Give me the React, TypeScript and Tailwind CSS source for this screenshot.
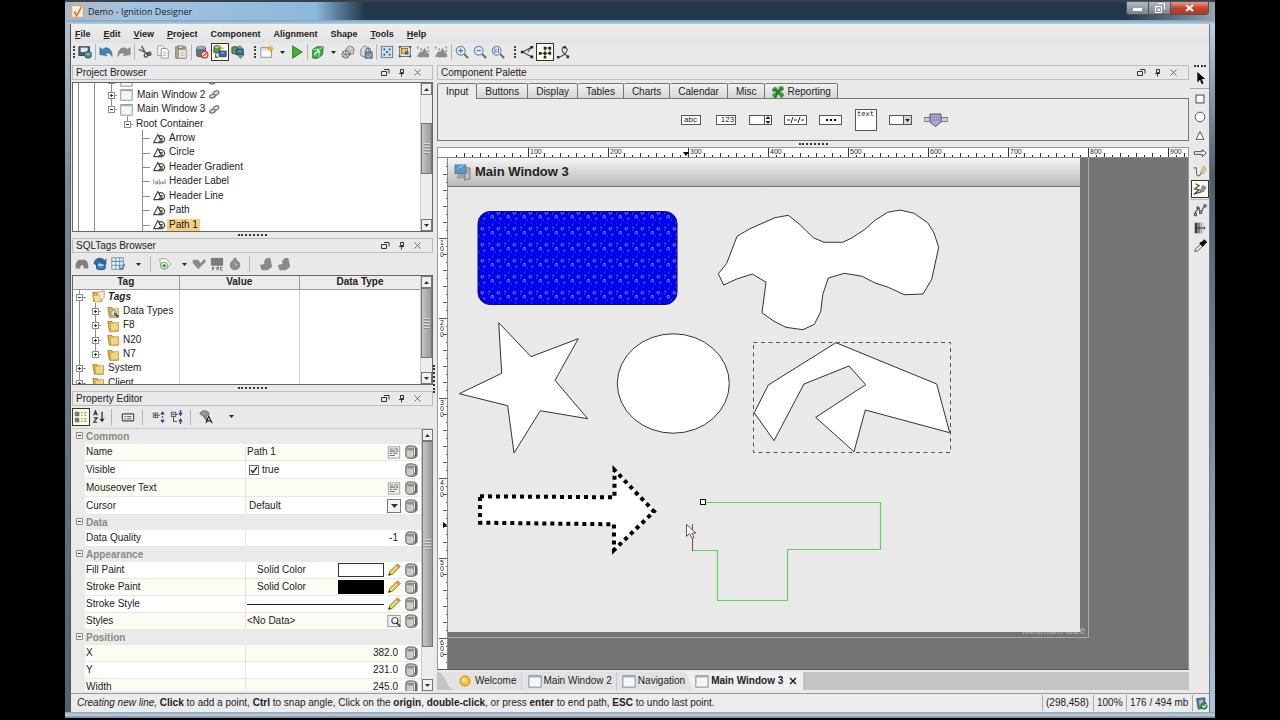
import type { ReactNode } from "react";
import clsx from "clsx";

/* ---------- icons, all on a 16x16 grid ---------- */

function Svg({ children, size = 16 }: { children: ReactNode; size?: number }) {
  return (
    <svg width={size} height={size} viewBox="0 0 16 16" fill="none" className="shrink-0">
      {children}
    </svg>
  );
}

const icons = {
  logo: (
    <>
      <rect x="1" y="1" width="14" height="14" rx="1" fill="#fdf3e6" stroke="#e09a52" />
      <path d="M4 8l3 5 6-11" stroke="#d9712a" strokeWidth="2" />
    </>
  ),
  publish: (
    <>
      <rect x="1" y="2" width="12" height="10" fill="#4d5f6b" stroke="#2d3a42" />
      <rect x="3" y="3" width="8" height="5" fill="#dfe9ee" />
      <circle cx="11.500" cy="11" r="4" fill="#3f8f93" stroke="#1f5a60" />
      <path d="M9 11c2-2 3 1 5-1" stroke="#c5e6c9" />
    </>
  ),
  undo: <path d="M1 11V3l3 2c5-4 11-1 11 8-2-4-5-5-8-3l2 2z" fill="#3d86bd" stroke="#235f91" strokeWidth=".7" />,
  redo: <path d="M15 11V3l-3 2C7 1 1 4 1 13c2-4 5-5 8-3l-2 2z" fill="#8d8d8d" stroke="#777" strokeWidth=".7" />,
  cut: (
    <>
      <path d="M4 1l5 9M1 5l13 6" stroke="#5a5a5a" strokeWidth="1.600" />
      <circle cx="9" cy="12" r="2" stroke="#444" strokeWidth="1.400" />
      <circle cx="13" cy="10" r="1.800" stroke="#444" strokeWidth="1.400" />
    </>
  ),
  copy: (
    <>
      <path d="M2 1h6l2 2v9H2z" fill="#f8f8f8" stroke="#999" />
      <path d="M6 4h6l2 2v9H6z" fill="#fff" stroke="#888" />
      <path d="M8 8h4M8 10h4M8 12h4" stroke="#bbb" />
    </>
  ),
  paste: (
    <>
      <rect x="2" y="2" width="11" height="13" fill="#b9a98a" stroke="#7f735c" />
      <rect x="5" y="1" width="5" height="3" fill="#ddd" stroke="#777" />
      <path d="M5 5h9v10H5z" fill="#f2f0ea" stroke="#8d8672" />
      <path d="M7 8h5M7 10h5M7 12h5" stroke="#c0b89f" />
    </>
  ),
  dbOff: (
    <>
      <path d="M2 3c0-2 10-2 10 0v9c0 2-10 2-10 0z" fill="#5e7387" stroke="#3c4d5c" />
      <ellipse cx="7" cy="3" rx="5" ry="1.500" fill="#9db0c0" />
      <circle cx="11" cy="11" r="3.700" fill="#f6e2de" stroke="#cf3a2a" strokeWidth="1.500" />
      <path d="M9 13l4-4" stroke="#cf3a2a" strokeWidth="1.500" />
    </>
  ),
  dbRead: (
    <>
      <path d="M1 2c0-1.500 7-1.500 7 0v6c0 1.500-7 1.500-7 0z" fill="#5c9a5c" stroke="#27502f" />
      <ellipse cx="4.500" cy="2.300" rx="3" ry="1" fill="#b5d8b5" />
      <rect x="7" y="7" width="8" height="6" fill="#3e64b4" stroke="#243c74" />
      <path d="M9 9h4M9 14.500h5" stroke="#a9c2f0" />
      <path d="M3 10v4h3" stroke="#3f8a3c" strokeWidth="1.500" />
      <path d="M9.500 5V2.500l3 2" stroke="#d9b93c" strokeWidth="1.300" />
    </>
  ),
  dbWrite: (
    <>
      <path d="M1 3c0-1.500 7-1.500 7 0v6c0 1.500-7 1.500-7 0z" fill="#5c9a5c" stroke="#27502f" />
      <rect x="6" y="5" width="8" height="6" fill="#3e64b4" stroke="#243c74" />
      <path d="M8 7h4" stroke="#a9c2f0" />
      <path d="M7 11h8l-4 4.500z" fill="#5fb052" stroke="#2f6e2b" strokeWidth=".7" />
      <path d="M7 4l3-3.500L13.500 4z" fill="#5fb052" stroke="#2f6e2b" strokeWidth=".7" />
    </>
  ),
  newWindow: (
    <>
      <rect x="1" y="3" width="12" height="11" fill="#fdfdfd" stroke="#7d8a94" />
      <path d="M2 5h10" stroke="#c9d4dc" strokeWidth="2" />
      <path d="M12 0v8M8 4h8M9.500 1.500l5 5M14.500 1.500l-5 5" stroke="#f0b429" strokeWidth="1.200" />
    </>
  ),
  play: <path d="M3 1l11 7-11 7z" fill="#3fb030" stroke="#1f7a1a" />,
  cube: (
    <>
      <path d="M2 5l5-3h7l-1 9-5 4H2z" fill="#3fae4a" stroke="#1c6f28" />
      <path d="M2 5h7l5-3M9 5v9" stroke="#b4ecb4" />
      <path d="M4 12c0-4 4-3 4-6l2 3" stroke="#e9ffe9" strokeWidth="1.500" />
    </>
  ),
  gearBox: (
    <>
      <path d="M6 4l4-3 5 3-1 6-5 1-3-3z" fill="#ddd" stroke="#6d6d6d" />
      <path d="M8 4l3 2 4-2M11 6v5" stroke="#999" />
      <circle cx="5.500" cy="10.500" r="4" fill="#c9c9c9" stroke="#666" strokeWidth="1.800" strokeDasharray="2 .8" />
      <circle cx="5.500" cy="10.500" r="1.500" fill="#777" />
    </>
  ),
  lockBox: (
    <>
      <path d="M2 5l4-4 5 2v6l-4 5-5-2z" fill="#dadada" stroke="#777" />
      <rect x="7" y="8" width="8" height="7" fill="#6f94b8" stroke="#3f5f7f" />
      <path d="M8 8V6c0-3 5-3 5 0v2" stroke="#666" strokeWidth="1.300" />
      <path d="M9 12l2 2 3-4" stroke="#f0d060" />
    </>
  ),
  selectAll: (
    <>
      <rect x="1.500" y="1.500" width="13" height="13" fill="#cfe2f2" stroke="#4e6f8b" />
      <path d="M4 4h2v2H4zM10 4h2v2h-2zM4 10h2v2H4zM10 10h2v2h-2zM7 7h2v2H7z" fill="#2d4a66" />
    </>
  ),
  group: (
    <>
      <rect x="2" y="2" width="12" height="11" fill="#f4f4f4" stroke="#555" />
      <rect x="4" y="4" width="7" height="6" fill="#ecca3c" stroke="#8d721b" />
      <rect x="8" y="7" width="4" height="4" fill="#3f68b8" />
      <path d="M1 1h2v2H1zM13 1h2v2h-2zM1 12h2v2H1zM13 12h2v2h-2z" fill="#444" />
    </>
  ),
  shapes: (
    <path d="M1 13l4-6 2 1 3-5 3 6 2 1v4H4zM1 2h2v2H1zM5 4h2v2H5zM13 2h2v2h-2zM13 6h2v2h-2z" fill="#8c8c8c" />
  ),
  zoomIn: (
    <>
      <circle cx="6.500" cy="6.500" r="5" fill="#e6eff8" stroke="#7088a8" strokeWidth="1.300" />
      <path d="M6.500 4v5M4 6.500h5" stroke="#4a6db0" strokeWidth="1.300" />
      <path d="M10.500 10.500L15 15" stroke="#6a6253" strokeWidth="2.200" />
    </>
  ),
  zoomOut: (
    <>
      <circle cx="6.500" cy="6.500" r="5" fill="#e6eff8" stroke="#7088a8" strokeWidth="1.300" />
      <path d="M4 6.500h5" stroke="#4a6db0" strokeWidth="1.300" />
      <path d="M10.500 10.500L15 15" stroke="#6a6253" strokeWidth="2.200" />
    </>
  ),
  zoomReset: (
    <>
      <circle cx="6.500" cy="6.500" r="5" fill="#e6eff8" stroke="#7088a8" strokeWidth="1.300" />
      <path d="M4.500 4v5M8.500 4v5M6.500 5v1M6.500 7.500v1" stroke="#4a6db0" strokeWidth="1.200" />
      <path d="M10.500 10.500L15 15" stroke="#6a6253" strokeWidth="2.200" />
    </>
  ),
  lineFree: (
    <>
      <path d="M13 2.500L3 8l10 5.500M13 2.500L9 8" stroke="#444" strokeWidth="1.200" />
      <path d="M12 1h3v3h-3zM1 6.500h3v3H1zM12 12h3v3h-3z" fill="#222" />
    </>
  ),
  lineOrtho: (
    <>
      <path d="M2 9.500h11.500v-6H8V14" stroke="#444" />
      <path d="M1 8h3v3H1zM12 2h3v3h-3zM6.500 2h3v3h-3zM12 8h3v3h-3zM6.500 8h3v3h-3zM6.500 12.500h3v3h-3z" fill="#222" />
    </>
  ),
  lineCurve: (
    <>
      <path d="M2 14c6-1 10-5 11-9-2-4-6-3-6 0s3 6 7 8" stroke="#444" strokeWidth="1.200" />
      <path d="M8.500 1h3v3h-3zM1 12.500h3v3H1zM12 12h3v3h-3z" fill="#333" />
    </>
  ),
  link: (
    <>
      <ellipse cx="10" cy="6" rx="4.500" ry="3" transform="rotate(-35 10 6)" fill="#ddd" stroke="#777" strokeWidth="1.800" />
      <ellipse cx="5" cy="10.500" rx="4.500" ry="2.600" transform="rotate(-15 5 10.500)" fill="#ccc" stroke="#777" strokeWidth="1.800" />
    </>
  ),
  window: (
    <>
      <rect x="1" y="2" width="14" height="13" fill="#f4f7f9" stroke="#75818a" />
      <path d="M1 3h14" stroke="#9fb0bc" strokeWidth="2" />
    </>
  ),
  shape: (
    <>
      <path d="M1 13L6 3l5 10z" stroke="#444" strokeWidth="1.400" />
      <path d="M7 5c6-2 9 4 6 7-2 1-4 1-6-1M8 5v3h3v4" stroke="#444" strokeWidth="1.400" />
    </>
  ),
  label: (
    <path d="M1 5v6M3.500 11V8h2v3zM7.500 5v6h2V8M11.500 11V8.500h1.500V11M15 5v6" stroke="#666" strokeWidth=".9" />
  ),
  folder: (
    <>
      <path d="M1 3h5l2 2h6v10H3z" fill="#e3b44a" stroke="#9c7a26" />
      <path d="M4 6l10-2v10L5 15z" fill="#f3d683" stroke="#c29a3c" strokeWidth=".6" />
    </>
  ),
  folderGear: (
    <>
      <path d="M1 3h5l2 2h6v10H3z" fill="#e3b44a" stroke="#9c7a26" />
      <path d="M4 6l10-2v10L5 15z" fill="#f3d683" stroke="#c29a3c" strokeWidth=".6" />
      <circle cx="8" cy="10" r="3.500" fill="#ddd" stroke="#777" />
      <path d="M9 10l5 5" stroke="#444" strokeWidth="2" />
    </>
  ),
  folders: (
    <>
      <path d="M1 3h5l1 2h5v9H2z" fill="#e3b44a" stroke="#9c7a26" />
      <path d="M6 3l9-2v8l-6 6z" fill="#f7efcf" stroke="#a99867" />
      <path d="M1 7l8-1 2 8-7 1z" fill="#f3dc95" stroke="#b89a4e" strokeWidth=".7" />
    </>
  ),
  binoculars: (
    <path d="M1 13c-1-5 1-9 4-10h6c3 1 5 5 4 10h-5c0-3-1-4-2-4s-2 1-2 4z" fill="#808080" />
  ),
  refreshDb: (
    <>
      <path d="M4 6c0-2 10-2 10 0v7c0 2-10 2-10 0z" fill="#3c7db5" stroke="#1f5182" />
      <ellipse cx="9" cy="9" rx="3.500" ry="1.500" fill="#bcd8ee" />
      <path d="M1 8c0-7 9-9 12-4l2-2v6H9l2-2C9 4 5 4 4 9z" fill="#2f6c9e" stroke="#1f5182" strokeWidth=".5" />
    </>
  ),
  grid: (
    <>
      <rect x="1" y="1" width="13" height="13" fill="#f7fbfd" stroke="#5f8298" />
      <path d="M1 5h13M1 9.500h13M5.500 1v13M10 1v13" stroke="#5d94b8" strokeWidth="1.200" />
      <path d="M9 11l3 3 4-6" stroke="#5a7ba0" strokeWidth="1.600" />
    </>
  ),
  tagAdd: (
    <>
      <path d="M2 2h7l6 6-6 6-6-4z" fill="#fafafa" stroke="#999" />
      <circle cx="7" cy="10" r="4" fill="#eaf5e7" stroke="#5d8f55" />
      <path d="M7 8v4M5 10h4" stroke="#2f8a2a" strokeWidth="1.500" />
    </>
  ),
  tagEdit: <path d="M1 3h6l3 4 4-5 2 3-6 6-3 3-6-7z" fill="#8b8b8b" />,
  opc: (
    <>
      <rect x="1" y="1" width="14" height="9" fill="#7d7d7d" />
      <path d="M3 11.500v4M3 12h2M3 13.500h2M8 15.500v-4h2v2H8M14.500 12H12v3h2.500" stroke="#555" strokeWidth=".9" />
    </>
  ),
  timer: (
    <>
      <circle cx="8" cy="9" r="6" fill="#8b8b8b" />
      <path d="M6 1h4v3H6z" fill="#8b8b8b" />
      <path d="M8 6v3h3" stroke="#ccc" />
    </>
  ),
  importTag: <path d="M1 9l5-1V4l3-3h4l1 5 1 5-5 4H3z" fill="#8a8a8a" />,
  categorized: (
    <>
      <path d="M1.500 2.500h4v4h-4zM1.500 9.500h4v4h-4z" fill="#ddd" stroke="#444" />
      <path d="M2.500 4.500h2M3.500 3.500v2M2.500 11.500h2M3.500 10.500v2" stroke="#222" strokeWidth=".8" />
      <path d="M8 3h2M11.500 3h3M8 6h2M11.500 6h3M8 10h2M11.500 10h3M8 13h2M11.500 13h3" stroke="#a09a52" strokeWidth="1.200" />
    </>
  ),
  sort: (
    <>
      <path d="M2 6l2-5 2 5M3 4.500h2M2 9h4l-4 5h4" stroke="#333" strokeWidth="1.300" />
      <path d="M11.500 2v9" stroke="#1f2f66" strokeWidth="1.500" />
      <path d="M8.500 10h6l-3 4z" fill="#1f2f66" />
    </>
  ),
  description: (
    <>
      <rect x="1.500" y="4.500" width="13" height="8" rx="1" fill="#eee" stroke="#444" strokeWidth="1.300" />
      <path d="M4 7.500h2M7 7.500h5M4 10h2M7 10h5" stroke="#555" />
    </>
  ),
  expandAll: (
    <>
      <rect x="1.500" y="3.500" width="5" height="5" fill="#ddd" stroke="#555" />
      <path d="M2.500 6h3M4 4.500v3M7 6h2" stroke="#333" />
      <path d="M9.500 5L12 1l2.500 4zM9.500 11l2.500 4 2.500-4z" fill="#28378c" />
      <path d="M12 7v2" stroke="#28378c" strokeWidth="1.500" />
    </>
  ),
  collapseAll: (
    <>
      <rect x="1.500" y="2.500" width="5" height="5" fill="#ddd" stroke="#555" />
      <path d="M2.500 5h3M4 8v5h4M7 5h2" stroke="#333" />
      <path d="M9.500 3l2.500 4 2.500-4zM9.500 13L12 9l2.500 4z" fill="#28378c" />
      <path d="M12 0v3M12 13v3" stroke="#28378c" strokeWidth="1.500" />
    </>
  ),
  filter: (
    <>
      <path d="M1 4c2-4 8-4 11 0L8 7l1 6-3-5z" fill="#999" stroke="#555" />
      <path d="M8 15l3-8 4 8M9 12.500h4" stroke="#222" strokeWidth="1.300" />
    </>
  ),
  page: (
    <>
      <path d="M1.500 2h13v13h-13z" fill="#f4f4f4" stroke="#9a9a9a" />
      <path d="M3 4.500h4M8 4.500h5M3 7h6M10 7h3M3 9.500h3M7 9.500h5M3 12h6" stroke="#6e6e6e" strokeWidth="1.200" />
    </>
  ),
  binding: (
    <>
      <path d="M2 4c0-3 4-3.500 8-3s5 2 5 4v7c0 2-3 3.500-7 3.500S2 14 2 12z" fill="#8f8f8f" stroke="#6a6a6a" />
      <path d="M3 5c2 1.500 4 1.500 6 1v8c-2 .5-4 .3-6-1z" fill="#c9c9c9" />
      <path d="M9.500 6.500v7M12 4.500v7" stroke="#f0f0f0" strokeWidth="1.200" />
      <path d="M13.500 4v9" stroke="#555" strokeWidth="1.500" />
      <path d="M4 3.500c2-1.500 6-1.500 8 0" stroke="#d8d8d8" />
    </>
  ),
  pencil: (
    <>
      <path d="M2 14l1-4 9-9 3 3-9 9z" fill="#eadb4e" stroke="#7a6c1c" />
      <path d="M11 2l3 3" stroke="#d98a8a" strokeWidth="2.500" />
      <path d="M1.500 14.500l3-1-2-2z" fill="#333" />
    </>
  ),
  lookup: (
    <>
      <rect x="1" y="1.500" width="14" height="13" fill="#f2f2f2" stroke="#888" />
      <circle cx="9" cy="7.500" r="3.500" fill="#fff" stroke="#555" strokeWidth="1.400" />
      <path d="M11 10l4 4" stroke="#333" strokeWidth="2" />
    </>
  ),
  computer: (
    <>
      <path d="M10 3l5 1v10l-5 1z" fill="#b9bcc0" stroke="#7b8085" />
      <path d="M11.500 6h2.500M11.500 8h2.500" stroke="#8a8e93" />
      <rect x="1" y="1" width="10" height="8" fill="#4d9adb" stroke="#6d7880" />
      <path d="M2 5l5-3.500h3z" fill="#a5d2f5" />
      <path d="M4 10h5l1 3H3z" fill="#a9adb2" stroke="#777" strokeWidth=".6" />
    </>
  ),
  dbOk: (
    <>
      <path d="M2 2l10-1 1 12-9 2z" fill="#4f7a9c" stroke="#45535e" />
      <path d="M5 4l5-1v6l-4 3z" fill="#a4c4da" />
      <circle cx="11" cy="11" r="4" fill="#3a9a3a" stroke="#1f6a22" />
      <path d="M9 11l2 2 3-4" stroke="#fff" strokeWidth="1.300" />
    </>
  ),
  clover: (
    <>
      <path d="M7 7L2 8 1 5l3-3 3 1zM8 7l1-5 4-1 2 3-2 3zM9 8l5 1 1 3-3 3-3-3zM7 9v5l-3 1-3-3 2-3z" fill="#3c9a3b" />
      <circle cx="8" cy="8" r="3" fill="#2f8a33" />
      <path d="M8 7l-3 8M3 5l4 2M12 4L9 7" stroke="#1f6424" strokeWidth="1.200" />
    </>
  ),
  // drawing tools on the right edge
  pointer: <path d="M5 1v12l3-3 2 5 2-1-2-5h4z" fill="#000" />,
  square: <rect x="3.500" y="3.500" width="9" height="9" fill="#fff" stroke="#333" />,
  circle: <circle cx="8" cy="8" r="5.500" fill="#fff" stroke="#444" />,
  triangle: <path d="M8 4l4.500 9h-9z" fill="#fff" stroke="#444" />,
  arrow: <path d="M1.500 6.500h9V4l4.500 4-4.500 4V9.500h-9z" fill="#fff" stroke="#333" />,
  scribble: (
    <>
      <path d="M1 5c3-3 3 1 3 5 0 6 5 4 6-2" stroke="#666" strokeWidth="1.200" />
      <path d="M9 9l3-7 3 4-3 5z" fill="#d9cc8f" stroke="#a39a68" strokeWidth=".7" />
    </>
  ),
  polyline: (
    <>
      <path d="M3 2l4 2-5 4 5 1-6 5 9-3" stroke="#444" strokeWidth="1.300" />
      <path d="M8 11l3-7 4 2-3 5z" fill="#8a94b4" stroke="#555f7c" strokeWidth=".7" />
    </>
  ),
  editPath: (
    <>
      <path d="M3 13c-2-3 2-4 3-7s1 4 3 4 2-5 4-6" stroke="#444" strokeWidth="1.200" />
      <path d="M1.500 12h2.500v2.500H1.500zM7.500 9.500H10V12H7.500zM12.500 2H15v2.500h-2.500zM4.500 4.500h2v2h-2z" fill="#ddd" stroke="#333" />
    </>
  ),
  gradient: (
    <>
      <rect x="2" y="2" width="3" height="12" fill="#3a3a3a" />
      <rect x="5" y="2" width="3" height="12" fill="#7c7c7c" />
      <rect x="8" y="2" width="3" height="12" fill="#b5b5b5" />
      <rect x="11" y="2" width="2" height="12" fill="#dcdcdc" />
      <path d="M4 8h10M13 6.500v3" stroke="#222" />
    </>
  ),
  dropper: (
    <>
      <path d="M2 14l1-3 6-5 2 2-6 6z" fill="#eee" stroke="#444" />
      <path d="M8 4l4 4M10 5l3-3 1.500 1.500-3 3z" stroke="#000" strokeWidth="2.500" />
    </>
  ),
};

type IconName = keyof typeof icons;

function Icon({ name, size }: { name: IconName; size?: number }) {
  return <Svg size={size}>{icons[name]}</Svg>;
}

/* ---------- shared pieces ---------- */

function Tool({ icon, label, active }: { icon: IconName; label: string; active?: boolean }) {
  return (
    <button
      type="button"
      aria-label={label}
      className={clsx(
        "flex items-center justify-center w-[18px] h-[18px] shrink-0",
        active && "bg-[#fffbe6] border border-[#333]"
      )}
    >
      <Icon name={icon} size={14} />
    </button>
  );
}

function Separator() {
  return <div className="w-px h-4 mx-px bg-[#b4b4b4] shrink-0" />;
}

function Grip({ className = "w-[9px] pl-1" }: { className?: string }) {
  return (
    <div className={clsx("flex justify-center shrink-0", className)}>
      <div className="h-3 border-l-2 border-dotted border-[#444]" />
    </div>
  );
}

function Caret() {
  return (
    <button type="button" aria-label="More" className="flex items-center justify-center w-3 shrink-0">
      <svg width="5" height="3" viewBox="0 0 5 3">
        <path d="M0 0h5L2.500 3z" fill="#222" />
      </svg>
    </button>
  );
}

function PanelHeader({ title }: { title: string }) {
  return (
    <div className="flex items-center h-[15px] pl-[3px] pr-[10px] border border-[#bcbcbc] bg-[#e9e9e9] shrink-0">
      <h2 className="mr-auto">{title}</h2>
      <div className="flex gap-[7px]">
        <button type="button" aria-label={"Float " + title}>
          <svg width="9" height="9" viewBox="0 0 9 9" fill="none" stroke="#333">
            <path d="M.5 3.500h5v4h-5zM3 1.500h5v4" />
          </svg>
        </button>
        <button type="button" aria-label={"Pin " + title}>
          <svg width="9" height="9" viewBox="0 0 9 9" fill="none" stroke="#333">
            <path d="M3.500 1.500h3v3h-3zM2 5.500h5M4.500 5v3.500" />
          </svg>
        </button>
        <button type="button" aria-label={"Close " + title}>
          <svg width="9" height="9" viewBox="0 0 9 9" fill="none" stroke="#666">
            <path d="M1.500 1.500l6 6M7.500 1.500l-6 6" />
          </svg>
        </button>
      </div>
    </div>
  );
}

function ScrollButton({ down }: { down?: boolean }) {
  return (
    <div className="flex items-center justify-center h-3 bg-[#f0f0f0] border border-[#777] shrink-0">
      <svg width="5" height="3" viewBox="0 0 5 3">
        <path d={down ? "M0 0h5L2.500 3z" : "M0 3h5L2.500 0z"} fill="#333" />
      </svg>
    </div>
  );
}

function Scrollbar({ thumb }: { thumb: string }) {
  return (
    <div className="flex flex-col w-3 bg-[#ededed] border-l border-[#ccc] shrink-0">
      <ScrollButton />
      <div className="flex-1 min-h-0">
        <div
          className={clsx(
            "flex flex-col items-center justify-center gap-px border border-[#777] bg-linear-to-r from-[#c6c6c6] to-[#989898]",
            thumb
          )}
        >
          {[0, 1, 2, 3].map((n) => (
            <div key={n} className="h-[2px] w-[6px] border-t border-[#d8d8d8] bg-[#8d8d8d]" />
          ))}
        </div>
      </div>
      <ScrollButton down />
    </div>
  );
}

function Splitter() {
  return (
    <div className="flex items-center justify-center h-[6px] shrink-0">
      <div className="w-[29px] border-t-2 border-dotted border-[#333]" />
    </div>
  );
}

/* Connector lines in front of a tree label. */
function Branch({
  width,
  trunks = [],
  joint,
  box,
  last,
}: {
  width: number;
  trunks?: number[];
  joint: number;
  box?: "plus" | "minus";
  last?: boolean;
}) {
  return (
    <svg width={width} height="16" viewBox={`0 0 ${width} 16`} fill="none" stroke="#8c8c8c" className="shrink-0">
      {trunks.map((x) => (
        <path key={x} d={`M${x + 0.5} 0v16`} />
      ))}
      <path d={`M${joint + 0.5} 0v${last ? 8 : 16}M${joint} 8.500H${width - 3}`} />
      {box && (
        <>
          <rect x={joint - 2.5} y="5.500" width="6" height="6" fill="#fff" />
          <path d={`M${joint - 1} 8.500h3` + (box === "plus" ? `M${joint + 0.5} 7v3` : "")} stroke="#333" />
        </>
      )}
    </svg>
  );
}

/* ---------- top of the window ---------- */

function TitleBar() {
  return (
    <header className="relative flex items-center h-6 px-[6px] border-t-2 border-[#3d4049] shrink-0">
      <div className="absolute inset-0 flex">
        <div className="w-[56px] bg-linear-to-r from-[#aab6c2] to-[#a6c3dc]" />
        <div className="w-[244px] bg-linear-to-r from-[#a3c4e2] via-[#8cb8dd] via-80% to-[#22384c]" />
        <div className="flex-1 bg-[#22384c]" />
        <div className="w-[90px] bg-linear-to-r from-[#22384c] to-[#98a4ae]" />
      </div>
      <div className="absolute inset-x-0 bottom-0 h-1 bg-linear-to-b from-[#7ea3c0] to-[#b4cfe2]" />
      <div className="relative flex items-center gap-1 -mt-[3px]">
        <Icon name="logo" size={13} />
        <h1 className="font-['Open_Sans',sans-serif] text-[9px]">Demo - Ignition Designer</h1>
      </div>
      <div className="relative flex self-start h-[14px] -mt-px ml-auto overflow-hidden border border-[#4a525a] rounded-b-[3px]">
        <button
          type="button"
          aria-label="Minimize"
          className="flex items-end justify-center w-[22px] pb-[3px] border-r border-[#4a525a] bg-linear-to-b from-[#b2bac1] to-[#77838e]"
        >
          <span className="w-[9px] h-[3px] bg-white" />
        </button>
        <button
          type="button"
          aria-label="Restore"
          className="flex items-center justify-center w-[22px] border-r border-[#4a525a] bg-linear-to-b from-[#b2bac1] to-[#77838e]"
        >
          <svg width="10" height="10" viewBox="0 0 10 10" fill="none" stroke="#fff">
            <path d="M3.500.5h6v6M.5 3.500h6v6h-6zM3 6h1.500v1.500H3z" />
          </svg>
        </button>
        <button
          type="button"
          aria-label="Close"
          className="flex items-center justify-center w-[37px] bg-linear-to-b from-[#dd9b8e] via-[#c4432e] via-50% to-[#b03a26]"
        >
          <svg width="9" height="8" viewBox="0 0 9 8" stroke="#fff" strokeWidth="2.200">
            <path d="M1 1l7 6M8 1L1 7" />
          </svg>
        </button>
      </div>
    </header>
  );
}

const menus = [
  ["", "F", "ile"],
  ["", "E", "dit"],
  ["", "V", "iew"],
  ["", "P", "roject"],
  ["Component", "", ""],
  ["Alignment", "", ""],
  ["Shape", "", ""],
  ["", "T", "ools"],
  ["", "H", "elp"],
];

function MenuBar() {
  return (
    <nav className="flex items-center gap-[13px] h-[19px] pl-1 font-bold bg-linear-to-b from-[#efefef] to-[#e2e2e2] shrink-0">
      {menus.map(([before, key, after]) => (
        <button type="button" key={before + key + after} className="text-[9px]">
          {before}
          <u>{key}</u>
          {after}
        </button>
      ))}
    </nav>
  );
}

function MainToolbar() {
  return (
    <div className="flex items-center h-[18px] shrink-0">
      <Grip className="w-[5px]" />
      <Tool icon="publish" label="Save and publish" />
      <Separator />
      <Tool icon="undo" label="Undo" />
      <Tool icon="redo" label="Redo" />
      <Separator />
      <Tool icon="cut" label="Cut" />
      <Tool icon="copy" label="Copy" />
      <Tool icon="paste" label="Paste" />
      <Separator />
      <Tool icon="dbOff" label="Communication off" />
      <Tool icon="dbRead" label="Communication read-only" active />
      <Tool icon="dbWrite" label="Communication read/write" />
      <Grip className="w-[11px] pl-1" />
      <Tool icon="newWindow" label="New window" />
      <Caret />
      <Tool icon="play" label="Preview" />
      <Separator />
      <Tool icon="cube" label="Project" />
      <Caret />
      <Tool icon="gearBox" label="Components" />
      <Tool icon="lockBox" label="Lock" />
      <Separator />
      <Tool icon="selectAll" label="Select all" />
      <Tool icon="group" label="Group" />
      <Tool icon="shapes" label="Union" />
      <Tool icon="shapes" label="Difference" />
      <Separator />
      <Tool icon="zoomIn" label="Zoom in" />
      <Tool icon="zoomOut" label="Zoom out" />
      <Tool icon="zoomReset" label="Actual size" />
      <Grip className="w-[11px] pl-1" />
      <Tool icon="lineFree" label="Free lines" />
      <Tool icon="lineOrtho" label="Perpendicular lines" active />
      <Tool icon="lineCurve" label="Curved lines" />
    </div>
  );
}

/* ---------- left column ---------- */

const components: { name: string; icon: IconName }[] = [
  { name: "Arrow", icon: "shape" },
  { name: "Circle", icon: "shape" },
  { name: "Header Gradient", icon: "shape" },
  { name: "Header Label", icon: "label" },
  { name: "Header Line", icon: "shape" },
  { name: "Path", icon: "shape" },
  { name: "Path 1", icon: "shape" },
];

function ProjectBrowser() {
  return (
    <section className="flex flex-col">
      <PanelHeader title="Project Browser" />
      <div className="flex h-[150px] mt-[2px] bg-white border border-[#666]">
        <div className="flex-1 min-w-0 overflow-hidden">
          <ul className="grid auto-rows-fr h-[159px] -mt-[10px]">
            {["Main Window 1", "Main Window 2", "Main Window 3"].map((name, i) => (
              <li key={name} className="flex items-center">
                <Branch width={47} trunks={[5, 21]} joint={38} box={i === 2 ? "minus" : "plus"} last={i === 2} />
                <Icon name="window" size={13} />
                <span className="px-[4px]">{name}</span>
                <Icon name="link" size={11} />
              </li>
            ))}
            <li className="flex items-center">
              <Branch width={63} trunks={[5, 21]} joint={54} box="minus" last />
              <span>Root Container</span>
            </li>
            {components.map((c) => (
              <li key={c.name} className="flex items-center">
                <Branch width={80} trunks={[5, 21]} joint={69} />
                <Icon name={c.icon} size={13} />
                <span className={clsx("ml-px px-[2px]", c.name === "Path 1" && "bg-[#f7d083]")}>{c.name}</span>
              </li>
            ))}
          </ul>
        </div>
        <Scrollbar thumb="h-[51px] mt-[28px]" />
      </div>
    </section>
  );
}

const tags: { name: string; depth: number; icon: IconName; open?: boolean }[] = [
  { name: "Tags", depth: 0, icon: "folders", open: true },
  { name: "Data Types", depth: 1, icon: "folderGear" },
  { name: "F8", depth: 1, icon: "folder" },
  { name: "N20", depth: 1, icon: "folder" },
  { name: "N7", depth: 1, icon: "folder" },
  { name: "System", depth: 0, icon: "folder" },
  { name: "Client", depth: 0, icon: "folder" },
];

function TagsBrowser() {
  return (
    <section className="flex flex-col">
      <PanelHeader title="SQLTags Browser" />
      <div className="flex items-center h-[22px] pl-px">
        <Tool icon="binoculars" label="Find" />
        <Tool icon="refreshDb" label="Refresh" />
        <Tool icon="grid" label="Columns" />
        <div className="w-[5px]" />
        <Caret />
        <div className="w-[5px]" />
        <Separator />
        <div className="w-1" />
        <Tool icon="tagAdd" label="New tag" />
        <div className="w-1" />
        <Caret />
        <Tool icon="tagEdit" label="Edit tag" />
        <Tool icon="opc" label="Browse OPC servers" />
        <Tool icon="timer" label="Scan classes" />
        <div className="w-1" />
        <Separator />
        <div className="w-[6px]" />
        <Tool icon="importTag" label="Import" />
        <Tool icon="importTag" label="Export" />
      </div>
      <div className="flex h-[110px] overflow-hidden bg-white border border-[#666]">
        <div className="flex-1 min-w-0 overflow-hidden">
          <table className="w-full h-[114px] table-fixed">
            <thead>
              <tr className="h-[13px] bg-[#ececec]">
                <th className="w-[106px] border-r border-b border-[#999]">Tag</th>
                <th className="border-r border-b border-[#999]">Value</th>
                <th className="border-b border-[#999]">Data Type</th>
              </tr>
            </thead>
            <tbody>
              {tags.map((t) => (
                <tr key={t.name} className="h-[14px]">
                  <td className="h-[14px] p-0 border-r border-[#ccc]">
                    <div className="flex items-center gap-[3px] h-[14px]">
                      <Branch
                        width={t.depth ? 31 : 16}
                        trunks={t.depth ? [6] : []}
                        joint={t.depth ? 22 : 6}
                        box={t.open ? "minus" : "plus"}
                        last={t.name === "N7"}
                      />
                      <Icon name={t.icon} size={13} />
                      <span className={clsx(t.open && "font-bold italic")}>{t.name}</span>
                    </div>
                  </td>
                  <td className="border-r border-[#ccc]" />
                  <td />
                </tr>
              ))}
            </tbody>
          </table>
        </div>
        <Scrollbar thumb="h-[70px]" />
      </div>
    </section>
  );
}

function Category({ name }: { name: string }) {
  return (
    <div className="flex items-center gap-[2px] h-[15px] pl-[3px] bg-[#eaeaea] shrink-0">
      <svg width="9" height="9" viewBox="0 0 9 9" fill="#f6f6f6" stroke="#8c8c8c">
        <path d="M1.500.5h6v6h-6z" />
        <path d="M3 3.500h3" stroke="#333" />
      </svg>
      <h3 className="font-bold text-[#8a8a80]">{name}</h3>
    </div>
  );
}

function Property({
  label,
  id,
  height = "h-[17px]",
  tint,
  children,
  action,
}: {
  label: string;
  id: string;
  height?: string;
  tint?: boolean;
  children?: ReactNode;
  action?: ReactNode;
}) {
  return (
    <div className={clsx("flex pl-[13px] shrink-0", height)}>
      <div className={clsx("flex flex-1 min-w-0 border-b border-[#e9e9e2]", tint ? "bg-[#fcfcf3]" : "bg-white")}>
        <label htmlFor={id} className="flex items-center w-[161px] pl-px border-r border-[#e6e6e0]">
          {label}
        </label>
        <div className="flex items-center flex-1 min-w-0 gap-[3px] pl-px pr-[3px]">
          {children}
          {action}
          <button type="button" aria-label={"Bind " + label}>
            <Icon name="binding" size={14} />
          </button>
        </div>
      </div>
    </div>
  );
}

function IconButton({ icon, label }: { icon: IconName; label: string }) {
  return (
    <button type="button" aria-label={label}>
      <Icon name={icon} size={14} />
    </button>
  );
}

const field = "flex-1 min-w-0 bg-transparent outline-none";

function PropertyEditor() {
  return (
    <section className="flex flex-col flex-1 min-h-0">
      <PanelHeader title="Property Editor" />
      <div className="flex items-center h-[22px] pb-px shrink-0">
        <Tool icon="categorized" label="Categorized" active />
        <Tool icon="sort" label="Alphabetical" />
        <div className="w-[2px]" />
        <Separator />
        <div className="w-[6px]" />
        <Tool icon="description" label="Show description" />
        <div className="w-[4px]" />
        <Separator />
        <div className="w-[6px]" />
        <Tool icon="expandAll" label="Expand all" />
        <Tool icon="collapseAll" label="Collapse all" />
        <div className="w-[3px]" />
        <Separator />
        <div className="w-[5px]" />
        <Tool icon="filter" label="Filter" />
        <div className="w-[10px]" />
        <Caret />
      </div>
      <div className="flex flex-1 min-h-0 bg-[#eaeaea] border-t border-[#ccc]">
        <div className="flex flex-col flex-1 min-w-0 overflow-hidden">
          <Category name="Common" />
          <Property label="Name" id="name" tint action={<IconButton icon="page" label="Edit name" />}>
            <input id="name" defaultValue="Path 1" className={field} />
          </Property>
          <Property label="Visible" id="visible" height="h-[18px]">
            <span className="flex items-center flex-1 gap-[3px] pl-[2px]">
              <span className="relative flex w-[10px] h-[10px]">
                <input
                  id="visible"
                  type="checkbox"
                  defaultChecked
                  className="w-[10px] h-[10px] appearance-none border border-[#666] bg-white"
                />
                <svg viewBox="0 0 10 10" fill="none" className="absolute inset-0 pointer-events-none">
                  <path d="M2 5l2 2.500L8 2" stroke="#333" strokeWidth="1.500" />
                </svg>
              </span>
              true
            </span>
          </Property>
          <Property
            label="Mouseover Text"
            id="mouseover"
            height="h-[18px]"
            tint
            action={<IconButton icon="page" label="Edit mouseover text" />}
          >
            <input id="mouseover" className={field} />
          </Property>
          <Property label="Cursor" id="cursor" height="h-[18px]">
            <div className="relative flex items-center flex-1 min-w-0 h-[15px]">
              <select id="cursor" className="w-full pl-[2px] appearance-none outline-none">
                <option>Default</option>
              </select>
              <span className="absolute right-0 flex items-center justify-center w-[14px] h-[14px] border border-[#777] bg-[#f4f4f4] pointer-events-none">
                <svg width="7" height="4" viewBox="0 0 7 4">
                  <path d="M0 0h7L3.500 4z" fill="#333" />
                </svg>
              </span>
            </div>
          </Property>
          <Category name="Data" />
          <Property label="Data Quality" id="quality">
            <input id="quality" defaultValue="-1" className={clsx(field, "pr-[3px] text-right")} />
          </Property>
          <Category name="Appearance" />
          <Property label="Fill Paint" id="fill" action={<IconButton icon="pencil" label="Edit fill" />}>
            <input id="fill" defaultValue="Solid Color" className={clsx(field, "pl-[10px]")} />
            <span className="w-[46px] h-[14px] border border-[#333] bg-white" />
          </Property>
          <Property label="Stroke Paint" id="stroke" tint action={<IconButton icon="pencil" label="Edit stroke" />}>
            <input id="stroke" defaultValue="Solid Color" className={clsx(field, "pl-[10px]")} />
            <span className="w-[46px] h-[14px] bg-black" />
          </Property>
          <Property label="Stroke Style" id="stroke-style" action={<IconButton icon="pencil" label="Edit stroke style" />}>
            <output id="stroke-style" className="flex-1 h-px bg-[#222]" />
          </Property>
          <Property label="Styles" id="styles" tint action={<IconButton icon="lookup" label="Edit styles" />}>
            <input id="styles" defaultValue="<No Data>" className={field} />
          </Property>
          <Category name="Position" />
          <Property label="X" id="pos-x" tint>
            <input id="pos-x" defaultValue="382.0" className={clsx(field, "pr-[3px] text-right")} />
          </Property>
          <Property label="Y" id="pos-y">
            <input id="pos-y" defaultValue="231.0" className={clsx(field, "pr-[3px] text-right")} />
          </Property>
          <Property label="Width" id="width" tint>
            <input id="width" defaultValue="245.0" className={clsx(field, "pr-[3px] text-right")} />
          </Property>
        </div>
        <Scrollbar thumb="h-[206px]" />
      </div>
    </section>
  );
}

/* ---------- palette ---------- */

const paletteTabs = ["Input", "Buttons", "Display", "Tables", "Charts", "Calendar", "Misc", "Reporting"];

const paletteItem = "flex items-center justify-center h-[10px] bg-white border border-[#555] text-[8px] leading-none";

function Palette() {
  return (
    <section className="flex flex-col">
      <PanelHeader title="Component Palette" />
      <div className="flex h-[16px] mt-[3px]">
        {paletteTabs.map((tab, i) => (
          <button
            type="button"
            key={tab}
            className={clsx(
              "flex items-center gap-[2px] pt-px border-t border-r border-[#777] rounded-t-[2px]",
              tab === "Reporting" ? "px-[6px]" : "px-2",
              i === 0 ? "border-l bg-[#ebebeb]" : "border-b bg-linear-to-b from-[#f2f2f2] to-[#d6d6d6]"
            )}
          >
            {tab === "Reporting" && <Icon name="clover" size={14} />}
            {tab}
          </button>
        ))}
        <div className="flex-1 border-b border-[#777]" />
      </div>
      <div className="flex items-center justify-center gap-[11px] h-[42px] border border-t-0 border-[#777] bg-[#ebebeb]">
        <button type="button" className="flex justify-center w-6">
          <span className={clsx(paletteItem, "w-5")}>abc</span>
        </button>
        <button type="button" className="flex justify-center w-6">
          <span className={clsx(paletteItem, "w-5 pl-1")}>123</span>
        </button>
        <button type="button" aria-label="Spinner" className="flex justify-center w-6">
          <span className={clsx(paletteItem, "w-[23px]")}>
            <svg width="21" height="8" viewBox="0 0 21 8">
              <path d="M14.500 0v8" stroke="#555" />
              <path d="M15.500 3h5L18 0zM15.500 5h5L18 8z" fill="#222" />
            </svg>
          </span>
        </button>
        <button type="button" aria-label="Formatted text field" className="flex justify-center w-6">
          <span className={clsx(paletteItem, "w-[23px]")}>
            <svg width="19" height="6" viewBox="0 0 19 6" stroke="#222">
              <path d="M1 3h3M5 6l2-6M8 3h3M12 6l2-6M15 3h3" />
            </svg>
          </span>
        </button>
        <button type="button" aria-label="Password field" className="flex justify-center w-6">
          <span className={clsx(paletteItem, "w-[23px] gap-[2px]")}>
            <span className="w-[2px] h-[2px] bg-black" />
            <span className="w-[2px] h-[2px] bg-black" />
            <span className="w-[2px] h-[2px] bg-black" />
          </span>
        </button>
        <button type="button" className="flex justify-center w-6">
          <span className="w-[22px] h-[22px] bg-white border border-[#555] font-['DejaVu_Sans_Mono',monospace] text-[7px] leading-[9px]">
            text
          </span>
        </button>
        <button type="button" aria-label="Dropdown list" className="flex justify-center w-6">
          <span className={clsx(paletteItem, "w-[23px]")}>
            <svg width="21" height="8" viewBox="0 0 21 8">
              <path d="M13 0h8v8h-8z" fill="#d8d8d8" />
              <path d="M13.500 0v8" stroke="#555" />
              <path d="M15 3h5l-2.500 3z" fill="#222" />
            </svg>
          </span>
        </button>
        <button type="button" aria-label="Slider" className="flex justify-center w-6">
          <svg width="24" height="14" viewBox="0 0 24 14">
            <path d="M0 4.500h24v4H0z" fill="#ccc" stroke="#777" />
            <path d="M6 1h11v8l-5.500 4.500L6 9z" fill="#a9a6d8" stroke="#55536f" />
            <path d="M8 4h7M8 7h7" stroke="#6865a8" strokeDasharray="1 1" />
          </svg>
        </button>
      </div>
    </section>
  );
}

/* ---------- editor ---------- */

const SCALE = 0.8;

/* One tick each 10 units; every second one is taller and each hundredth has a number. */
function HorizontalRuler() {
  return (
    <svg width="100%" height="9" className="block">
      {Array.from({ length: 160 }, (_, i) => {
        const x = i * 10 * SCALE + 0.5;
        const top = i % 10 === 0 ? 0 : i % 2 === 0 ? 5 : 7;
        return i > 0 && <path key={i} d={`M${x} ${top}V9`} stroke="#333" />;
      })}
      {Array.from({ length: 9 }, (_, i) => (
        <text key={i} x={(i + 1) * 100 * SCALE + 2} y="6" className="text-[7px]" fill="#222">
          {(i + 1) * 100}
        </text>
      ))}
      <path d="M235 4h6l-3 4z" fill="#000" />
    </svg>
  );
}

function VerticalRuler() {
  return (
    <svg width="9" height="100%" className="block">
      {Array.from({ length: 90 }, (_, i) => {
        const y = i * 10 * SCALE + 0.5;
        const left = i % 10 === 0 ? 0 : i % 2 === 0 ? 4 : 7;
        return i > 0 && <path key={i} d={`M${left} ${y}H9`} stroke="#555" />;
      })}
      {Array.from({ length: 6 }, (_, i) =>
        String((i + 1) * 100)
          .split("")
          .map((digit, n) => (
            <text key={`${i}-${n}`} x="1" y={(i + 1) * 100 * SCALE + 7 + n * 6} className="text-[7px]" fill="#222">
              {digit}
            </text>
          ))
      )}
      <path d="M4 364v6l4-3z" fill="#000" />
    </svg>
  );
}

function Drawing() {
  return (
    <svg viewBox="448 158 632 474" className="absolute inset-0 w-full h-full" fill="#fff" stroke="#333">
      <defs>
        <pattern id="bubbles" x="478" y="224" width="16" height="16" patternUnits="userSpaceOnUse">
          <rect width="16" height="16" fill="#0000f0" stroke="none" />
          <g fill="none" stroke="#9fb5a4" strokeWidth=".8">
            <circle cx="4.300" cy="4.700" r="1.300" />
            <circle cx="14.300" cy="8.700" r="1.300" />
            <circle cx="6.300" cy="10.700" r=".5" />
            <circle cx="11.300" cy="3.700" r=".5" />
          </g>
          <path d="M5 15h1M10 6h1M1 12h1M14 1h1" stroke="#5868d0" />
        </pattern>
      </defs>
      <rect x="478" y="211.500" width="199" height="93" rx="12" fill="url(#bubbles)" stroke="#101060" />
      <path d="M718.300 273.700L726.700 263.300 737 236.300 750 228.700 775 217.700 788.300 215.300 800 224.700 813.300 237.700 824 242.300 842.700 242.300 851.700 238 865 229.300 875 220.300 887.700 212.300 900 210 914 213.300 927.700 222.700 934 233 938.700 247.300 931.700 279.300 923 294 904.300 294.700 888.300 287.300 875 283 862.300 276.300 844.300 273.300 828.300 278 822.700 294.700 820.700 311.700 814.300 324.300 803 329.700 786 327.300 774 321.300 762 312.700 766 282.300 752.300 274 736.700 279 723.700 285z" />
      <path d="M498.700 322.700L531 356.700 578.300 338.700 555 380.300 587.700 418.700 540.300 410.700 514 453 507.700 405.700 459.300 393.700 501.700 373.300z" />
      <ellipse cx="673.300" cy="383.500" rx="56" ry="49.700" />
      <path d="M754.300 412.700L768.300 385 836 342.700 936.700 384 949.700 432.700 865.300 410 854 451.700 815.700 417.300 865.700 384.700 849 366 804 384 774 440.700z" />
      <rect x="753.500" y="342.500" width="197" height="110" fill="none" stroke="#555" strokeDasharray="4 3.500" />
      <path
        d="M480 496.300L614.500 497.300 614.500 470 654 511.500 614 550 614 524.300 480 522.700z"
        stroke="#000"
        strokeWidth="4"
        strokeDasharray="4 4"
      />
      <path
        d="M702.500 502.500H880.500V549.500H787.500V600.500H717.500V550.500H692.500"
        fill="none"
        stroke="#5fd45a"
        strokeWidth="1.200"
      />
      <path d="M692.500 551V524" stroke="#b03040" />
      <rect x="700.500" y="499.500" width="5" height="5" stroke="#111" />
      <path d="M686.500 524.500v12l3-3 2.500 5 2-1-2-4.500h4z" stroke="#555" />
    </svg>
  );
}

function Editor() {
  return (
    <section className="flex flex-col flex-1 min-h-0 overflow-hidden border border-b-[#555] border-[#999] bg-white">
      <div className="pl-[10px] border-b border-[#888]">
        <HorizontalRuler />
      </div>
      <div className="flex flex-1 min-h-0">
        <div className="w-[10px] pl-px border-r border-[#888] overflow-hidden">
          <VerticalRuler />
        </div>
        <div className="relative flex-1 min-w-0 overflow-hidden bg-[#747474]">
          <div className="absolute top-0 left-0 flex items-end justify-end w-[641px] h-[480px] pr-[3px] border-r border-b border-[#a9a9a9] text-[#b5b5b5] leading-[12px]">
            Minimum Size
          </div>
          <div className="absolute top-0 left-0 w-[632px] h-[474px] bg-[#e9e9e9]">
            <div className="flex items-center gap-1 h-[29px] pl-[6px] border-b border-[#777] bg-linear-to-b from-[#f5f5f5] to-[#b9b9b9]">
              <Icon name="computer" size={17} />
              <h2 className="font-bold text-[13px]">Main Window 3</h2>
            </div>
            <Drawing />
          </div>
        </div>
      </div>
    </section>
  );
}

function EditorTabs() {
  return (
    <div className="flex h-[18px] mt-[2px] bg-[#c4c4c4] shrink-0">
      <svg width="18" height="18" viewBox="0 0 18 18">
        <path d="M0 0h18v18C10 18 8 0 0 0z" fill="#e2e2e2" />
      </svg>
      <div className="flex items-stretch bg-[#e2e2e2]">
        <button type="button" className="flex items-center gap-1 px-1 border-r border-[#d0d0d0]">
          <svg width="12" height="12" viewBox="0 0 12 12">
            <circle cx="6" cy="6" r="5" fill="#f8bf2b" stroke="#d08a12" />
            <circle cx="5" cy="5" r="2.500" fill="#ffe58c" />
          </svg>
          Welcome
        </button>
        <button type="button" className="flex items-center gap-[2px] pl-[6px] pr-1 border-r border-[#c8c8c8]">
          <Icon name="window" size={14} />
          Main Window 2
        </button>
        <button type="button" className="flex items-center gap-[2px] pl-[5px]">
          <Icon name="window" size={14} />
          Navigation
        </button>
        <svg width="10" height="18" viewBox="0 0 10 18">
          <path d="M0 0c5 2 4 16 10 18V0z" fill="#efefef" />
        </svg>
      </div>
      <div className="flex items-center gap-[2px] pr-[6px] bg-[#efefef] font-bold">
        <button type="button" className="flex items-center gap-[2px]">
          <Icon name="window" size={14} />
          Main Window 3
        </button>
        <button type="button" aria-label="Close tab" className="pl-1">
          <svg width="8" height="8" viewBox="0 0 8 8" stroke="#111" strokeWidth="1.300">
            <path d="M1 1l6 6M7 1L1 7" />
          </svg>
        </button>
      </div>
    </div>
  );
}

function DrawingTools() {
  return (
    <div className="flex flex-col items-center w-5 pl-px shrink-0">
      <div className="w-3 border-t-2 border-dotted border-[#333]" />
      <div className="h-[2px]" />
      <Tool icon="pointer" label="Select" />
      <div className="w-full h-px my-px bg-[#aaa]" />
      <Tool icon="square" label="Rectangle" />
      <Tool icon="circle" label="Ellipse" />
      <Tool icon="triangle" label="Polygon" />
      <Tool icon="arrow" label="Arrow" />
      <Tool icon="scribble" label="Pencil" />
      <Tool icon="polyline" label="Line" active />
      <div className="w-full h-px my-px bg-[#bbb]" />
      <Tool icon="editPath" label="Edit path" />
      <Tool icon="gradient" label="Gradient" />
      <Tool icon="dropper" label="Eyedropper" />
    </div>
  );
}

function StatusBar() {
  return (
    <footer className="flex items-center h-[19px] border-t border-[#999] bg-[#ececec] shrink-0">
      <p className="pl-[6px] mr-auto whitespace-nowrap">
        <i>Creating new line,</i> <b>Click</b> to add a point, <b>Ctrl</b> to snap angle, Click on the <b>origin</b>,{" "}
        <b>double-click</b>, or press <b>enter</b> to end path, <b>ESC</b> to undo last point.
      </p>
      <div className="flex items-center h-full py-px">
        <div className="flex items-center w-[51px] h-full pl-[3px] border-l border-[#aaa]">(298,458)</div>
        <div className="flex items-center w-[33px] h-full pl-[3px] border-l border-[#aaa]">100%</div>
        <div className="flex items-center w-[66px] h-full pl-[3px] border-l border-[#aaa]">176 / 494 mb</div>
        <div className="flex items-center justify-center w-[17px] h-full border-l border-[#aaa]">
          <Icon name="dbOk" size={13} />
        </div>
      </div>
    </footer>
  );
}

export default function App() {
  return (
    <div className="flex h-screen px-[65px] overflow-hidden bg-black font-['Liberation_Sans',Arial,sans-serif] text-[10px] leading-[12px] text-[#222]">
      <div className="flex flex-col flex-1 min-w-0 pb-[2px]">
        <TitleBar />
        <div className="flex flex-1 min-h-0">
          <div className="w-[6px] bg-linear-to-b from-[#b3bfca] via-[#7b8790] via-24% to-[#4c6272] border-r border-[#555]" />
          <div className="flex flex-col flex-1 min-w-0 bg-[#e9e9e9]">
            <MenuBar />
            <MainToolbar />
            <div className="flex flex-1 min-h-0 pt-1">
              <div className="flex flex-col w-[362px] pb-[2px] pl-px shrink-0">
                <ProjectBrowser />
                <Splitter />
                <TagsBrowser />
                <Splitter />
                <PropertyEditor />
              </div>
              <div className="flex items-center w-1 shrink-0">
                <div className="h-7 border-l-2 border-dotted border-[#333]" />
              </div>
              <main className="flex flex-col flex-1 min-w-0 pb-[3px]">
                <Palette />
                <Splitter />
                <Editor />
                <EditorTabs />
              </main>
              <DrawingTools />
            </div>
            <StatusBar />
          </div>
          <div className="w-[6px] bg-linear-to-b from-[#b7d2e6] via-[#4d5d6a] via-22% to-[#a9c5da] border-l border-[#778]" />
        </div>
        <div className="h-[6px] bg-linear-to-b from-[#8aa4b6] via-[#bdd2e2] via-50% to-[#6b8496] shrink-0" />
      </div>
    </div>
  );
}
